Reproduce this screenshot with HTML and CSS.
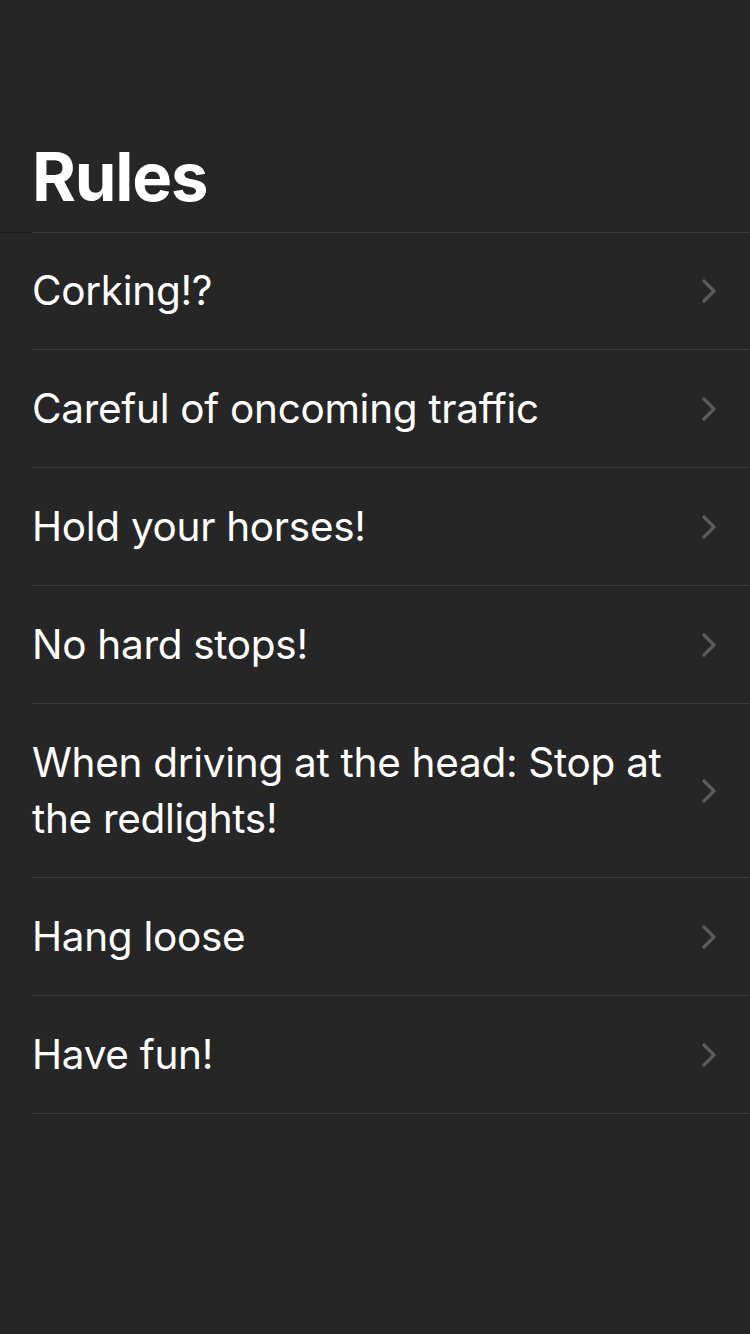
FILE: index.html
```html
<!DOCTYPE html>
<html>
<head>
<meta charset="utf-8">
<link rel="stylesheet" href="styles.css">
</head>
<body>
<div class="screen">
  <header class="header">
    <h1 class="title">Rules</h1>
  </header>
  <ul class="list">
    <li class="row"><span class="label">Corking!?</span><svg class="chev" viewBox="0 0 14 24"><path d="M2 2 L12 12 L2 22"/></svg></li>
    <li class="row"><span class="label">Careful of oncoming traffic</span><svg class="chev" viewBox="0 0 14 24"><path d="M2 2 L12 12 L2 22"/></svg></li>
    <li class="row"><span class="label">Hold your horses!</span><svg class="chev" viewBox="0 0 14 24"><path d="M2 2 L12 12 L2 22"/></svg></li>
    <li class="row"><span class="label">No hard stops!</span><svg class="chev" viewBox="0 0 14 24"><path d="M2 2 L12 12 L2 22"/></svg></li>
    <li class="row"><span class="label">When driving at the head: Stop at the redlights!</span><svg class="chev" viewBox="0 0 14 24"><path d="M2 2 L12 12 L2 22"/></svg></li>
    <li class="row"><span class="label">Hang loose</span><svg class="chev" viewBox="0 0 14 24"><path d="M2 2 L12 12 L2 22"/></svg></li>
    <li class="row"><span class="label">Have fun!</span><svg class="chev" viewBox="0 0 14 24"><path d="M2 2 L12 12 L2 22"/></svg></li>
  </ul>
</div>
</body>
</html>
```
FILE: styles.css
```css
html, body {
  margin: 0;
  padding: 0;
  background: #262626;
}
.screen {
  width: 750px;
  height: 1334px;
  background: #262626;
  font-family: Inter, "Liberation Sans", sans-serif;
  color: #ffffff;
  overflow: hidden;
}
.header {
  height: 233px;
  box-sizing: border-box;
  border-bottom: 1px solid #1b1b1b;
  display: flex;
  align-items: flex-end;
  padding: 0 32px 15px;
}
.title {
  margin: 0;
  font-size: 67px;
  font-weight: 700;
  line-height: 80px;
  letter-spacing: -1.2px;
}
.list {
  list-style: none;
  margin: -1px 0 0 0;
  padding: 0 0 0 32px;
}
.row {
  display: flex;
  align-items: center;
  border-top: 1px solid #3a3a3a;
  padding: 31px 34px 30px 0;
}
.row:first-child {
  padding-top: 30px;
}
.row:last-child {
  border-bottom: 1px solid #3a3a3a;
}
.label {
  flex: 1;
  font-size: 40.5px;
  line-height: 56px;
  font-weight: 400;
  padding-right: 24px;
  letter-spacing: -0.3px;
}
.chev {
  width: 14px;
  height: 24px;
  flex: none;
  fill: none;
  stroke: #5b5b5e;
  stroke-width: 3.2;
  stroke-linecap: round;
  stroke-linejoin: round;
}
```
